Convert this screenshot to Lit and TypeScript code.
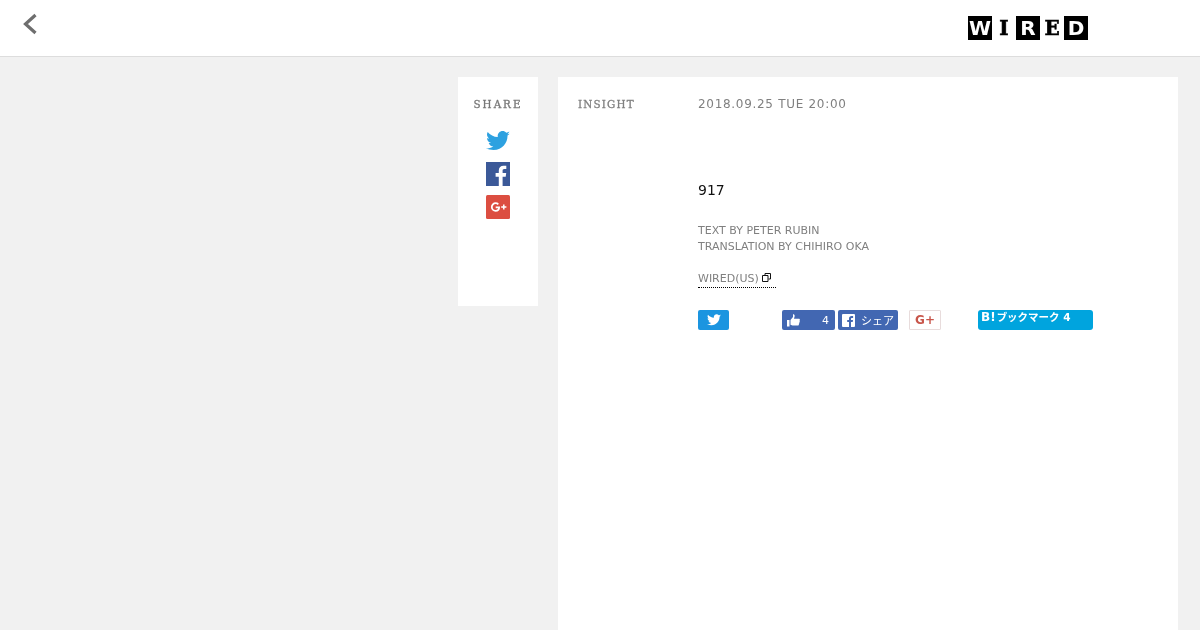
import { LitElement, html, css } from "lit";
import { customElement } from "lit/decorators.js";

@customElement("app-root")
export class AppRoot extends LitElement {
  static styles = css`
    :host { display: block; height: 630px; overflow: hidden; background: #f1f1f1; font-family: "DejaVu Sans", sans-serif; color: #808080; will-change: transform; }
    header { height: 56px; background: #fff; border-bottom: 1px solid #ddd; display: flex; justify-content: space-between; align-items: flex-start; }
    .back { margin: 12px 0 0 22px; display: block; }
    .logo { display: flex; margin: 16px 112px 0 0; width: 120px; height: 24px; }
    .logo span { width: 24px; height: 24px; display: flex; align-items: center; justify-content: center; font: bold 20px/24px "DejaVu Sans", sans-serif; color: #000; }
    .logo span.inv { background: #000; color: #fff; }
    .logo span.slab { font-family: "DejaVu Serif", serif; -webkit-text-stroke: 0.6px #000; }
    .page { display: flex; gap: 20px; padding: 20px 22px 0 458px; align-items: flex-start; }
    .share { width: 80px; height: 229px; background: #fff; display: flex; flex-direction: column; align-items: center; flex: none; }
    .slabel { font: 11.5px/14px "DejaVu Serif", serif; font-stretch: condensed; letter-spacing: 2px; color: #777; margin-top: 20px; -webkit-text-stroke: 0.3px #777; }
    .sicons { display: flex; flex-direction: column; align-items: center; margin-top: 20px; }
    .sicons svg { display: block; }
    .tw { margin-bottom: 11px; }
    .fb { margin-bottom: 9px; }
    article { flex: 1; height: 560px; background: #fff; padding: 20px; box-sizing: border-box; }
    .meta { display: flex; height: 14px; font-size: 12px; line-height: 14px; }
    .cat { width: 120px; font: 11.5px/14px "DejaVu Serif", serif; font-stretch: condensed; letter-spacing: 1.2px; -webkit-text-stroke: 0.3px #808080; }
    .date { letter-spacing: 0.7px; }
    .body { margin-left: 120px; }
    .count { margin-top: 71px; font-size: 14px; line-height: 16px; color: #111; }
    .credits { margin-top: 25px; font-size: 11px; line-height: 16px; }
    .link { display: inline-flex; align-items: center; gap: 3px; margin-top: 16px; height: 17px; font-size: 11px; line-height: 16px; border-bottom: 1px dotted #000; width: 78px; box-sizing: border-box; white-space: nowrap; vertical-align: top; }
    .link svg { margin-bottom: 3px; }
    .btns { display: flex; margin-top: 22px; height: 22px; align-items: flex-start; }
    .btn { display: flex; align-items: center; box-sizing: border-box; height: 20px; border-radius: 2px; color: #fff; font-size: 11px; flex: none; }
    .t { width: 31px; background: #1b95e0; justify-content: center; }
    .like { width: 53px; margin-left: 53px; background: #4267b2; padding: 0 6px 0 5px; justify-content: space-between; }
    .fshare { width: 60px; margin-left: 3px; background: #4267b2; padding: 0 4px; gap: 6px; }
    .g { width: 32px; margin-left: 11px; background: #fff; border: 1px solid #e8dcdc; justify-content: center; color: #c8554a; font-weight: bold; font-size: 12px; border-radius: 1px; }
    .hatena { width: 115px; margin-left: 37px; background: #00a4de; border-radius: 3px; padding: 0 3px; align-items: flex-start; gap: 1px; font-weight: bold; font-size: 10.5px; line-height: 14px; font-family: "DejaVu Sans", "Noto Sans CJK JP", sans-serif; }
    .hatena b { font-size: 12px; }
    .jp { font-family: "DejaVu Sans", "Noto Sans CJK JP", sans-serif; }
  `;

  render() {
    return html`
      <header>
        <svg class="back" width="18" height="24" viewBox="0 0 18 24">
          <path d="M13.500 3 L3.500 12 L13.500 21" fill="none" stroke="#6e6e6e" stroke-width="3.200"/>
        </svg>
        <div class="logo">
          <span class="inv">W</span><span class="slab">I</span><span class="inv">R</span><span class="slab">E</span><span class="inv">D</span>
        </div>
      </header>
      <div class="page">
        <aside class="share">
          <div class="slabel">SHARE</div>
          <div class="sicons">
            <svg class="tw" width="24" height="20" viewBox="0 0 24 20"><path fill="#2da1e0" d="M24 2.400c-.9.400-1.800.7-2.800.8 1-.6 1.800-1.600 2.200-2.700-1 .6-2 1-3.100 1.200C19.300.6 18 0 16.600 0c-2.700 0-4.900 2.200-4.900 4.900 0 .4 0 .8.100 1.100C7.700 5.800 4.100 3.900 1.700.9c-.4.700-.7 1.600-.7 2.500 0 1.700.9 3.200 2.200 4.100-.8 0-1.600-.2-2.200-.6v.1c0 2.400 1.700 4.400 3.900 4.800-.4.100-.8.200-1.300.2-.3 0-.6 0-.9-.1.600 2 2.400 3.400 4.600 3.400-1.700 1.300-3.800 2.100-6.100 2.100-.4 0-.8 0-1.200-.1C2.200 18.200 4.800 19 7.500 19c9.100 0 14-7.500 14-14v-.6c1-.7 1.800-1.500 2.500-2z"/></svg>
            <svg class="fb" width="24" height="24" viewBox="0 0 24 24"><rect width="24" height="24" fill="#3b5998"/><path fill="#fff" d="M16.600 24v-9.300h3.100l.5-3.600h-3.600V8.800c0-1 .3-1.800 1.800-1.800h1.900V3.800c-.3 0-1.500-.1-2.800-.1-2.800 0-4.700 1.700-4.700 4.800v2.600H9.600v3.600h3.200V24z"/></svg>
            <svg width="24" height="24" viewBox="0 0 24 24"><rect width="24" height="24" rx="1.500" fill="#dc4e41"/><path fill="none" stroke="#fff" stroke-width="1.800" d="M12.300 9.300c-.8-.8-1.700-1.100-2.700-1.100-2.100 0-3.800 1.700-3.800 3.800s1.700 3.800 3.800 3.800c2.200 0 3.500-1.400 3.500-3.500H9.700"/><path fill="none" stroke="#fff" stroke-width="1.500" d="M15.200 12h5.200M17.800 9.400v5.200"/></svg>
          </div>
        </aside>
        <article>
          <div class="meta"><div class="cat">INSIGHT</div><div class="date">2018.09.25 TUE 20:00</div></div>
          <div class="body">
            <div class="count">917</div>
            <div class="credits">TEXT BY PETER RUBIN<br />TRANSLATION BY CHIHIRO OKA</div>
            <div class="link">WIRED(US)
              <svg width="9" height="9" viewBox="0 0 9 9"><path fill="none" stroke="#111" d="M3 2.500V.5h5.500V6H6.500M.5 2.500H6V8.500H.5z"/></svg>
            </div>
            <div class="btns">
              <div class="btn t"><svg width="14" height="12" viewBox="0 0 24 20"><path fill="#fff" d="M24 2.400c-.9.400-1.800.7-2.800.8 1-.6 1.800-1.600 2.200-2.700-1 .6-2 1-3.100 1.200C19.300.6 18 0 16.600 0c-2.700 0-4.900 2.200-4.900 4.900 0 .4 0 .8.100 1.100C7.700 5.800 4.100 3.900 1.700.9c-.4.700-.7 1.600-.7 2.500 0 1.700.9 3.200 2.200 4.100-.8 0-1.600-.2-2.200-.6v.1c0 2.400 1.700 4.400 3.900 4.800-.4.100-.8.200-1.300.2-.3 0-.6 0-.9-.1.600 2 2.400 3.400 4.600 3.400-1.700 1.300-3.800 2.100-6.100 2.100-.4 0-.8 0-1.200-.1C2.200 18.200 4.800 19 7.500 19c9.100 0 14-7.500 14-14v-.6c1-.7 1.800-1.500 2.500-2z"/></svg></div>
              <div class="btn like"><svg width="13" height="13" viewBox="0 0 13 13"><path fill="#fff" d="M0 6h2.500v6.500H0zM3.500 6l2.500-3V.5C6 0 7.700 0 7.700 2L7 4.800h4.800c1.200 0 1.300 1.200.7 1.700.5.500.4 1.300-.2 1.700.4.600.2 1.300-.4 1.600.2.900-.3 1.700-1.200 1.700H5.500l-2-.8z"/></svg><span>4</span></div>
              <div class="btn fshare"><svg width="13" height="13" viewBox="0 0 13 13"><rect width="13" height="13" rx="1" fill="#fff"/><path fill="#4267b2" d="M9 13V8h1.700l.3-2H9V4.900c0-.6.200-1 1-1h1.100V2.100C10.900 2 10.300 2 9.600 2 8 2 7 3 7 4.700V6H5.200v2H7v5z"/></svg><span class="jp">シェア</span></div>
              <div class="btn g">G+</div>
              <div class="btn hatena"><b>B!</b><span>ブックマーク 4</span></div>
            </div>
          </div>
        </article>
      </div>
    `;
  }
}
